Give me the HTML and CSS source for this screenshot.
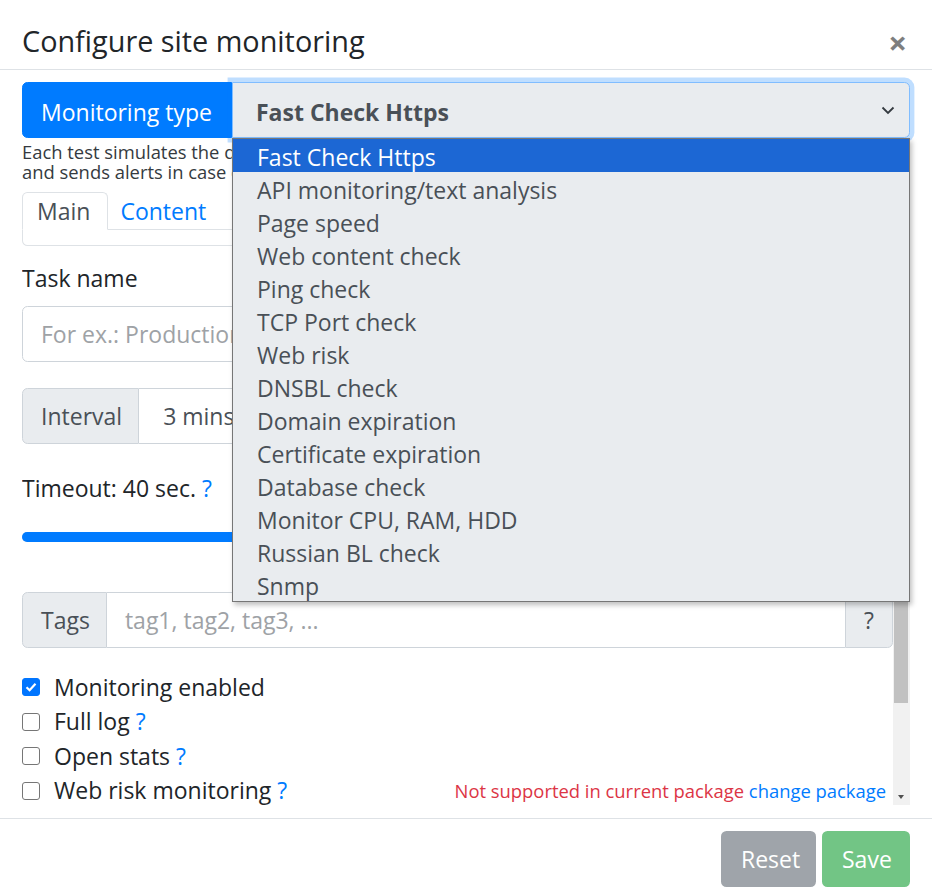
FILE: index.html
```html
<!DOCTYPE html>
<html lang="en">
<head>
<meta charset="utf-8">
<title>Configure site monitoring</title>
<link rel="stylesheet" href="styles.css">
</head>
<body>
<div class="modal">
  <header class="modal-header">
    <h5 class="modal-title">Configure site monitoring</h5>
    <button class="close" type="button">&times;</button>
  </header>

  <div class="modal-body">
    <div class="input-group type-group">
      <span class="group-label primary">Monitoring type</span>
      <div class="select focused">
        <span class="select-value">Fast Check Https</span>
        <svg class="chevron" width="14" height="9" viewBox="0 0 14 9"><path d="M1.5 1.5 L7 7 L12.5 1.5" fill="none" stroke="#343a40" stroke-width="1.8"/></svg>
      </div>
    </div>
    <p class="help">Each test simulates the download of the page by the browser, checks the answer code<br>and sends alerts in case of errors or when the check timeout is exceeded.</p>

    <div class="scroll-wrap">
      <div class="scroll-content">
        <div class="tabs">
          <nav class="nav-tabs">
            <a class="nav-link active">Main</a>
            <a class="nav-link">Content</a>
          </nav>
          <div class="tab-content"></div>
        </div>

        <div class="field">
          <label class="field-label">Task name</label>
          <div class="form-control placeholder">For ex.: Production site</div>
        </div>

        <div class="input-group interval-group">
          <span class="group-label">Interval</span>
          <div class="form-control value">3 mins</div>
        </div>

        <p class="timeout">Timeout: 40 sec. <a class="hint">?</a></p>
        <div class="range"><div class="range-fill"></div></div>

        <div class="input-group tags-group">
          <span class="group-label">Tags</span>
          <div class="form-control placeholder flat">tag1, tag2, tag3, ...</div>
          <span class="group-label append">?</span>
        </div>

        <ul class="checks">
          <li><span class="box checked"><svg width="12" height="10" viewBox="0 0 12 10"><path d="M1.5 5.2 L4.6 8.2 L10.5 1.8" fill="none" stroke="#fff" stroke-width="2.2"/></svg></span>Monitoring enabled</li>
          <li><span class="box"></span>Full log <a class="hint">?</a></li>
          <li><span class="box"></span>Open stats <a class="hint">?</a></li>
          <li><span class="box"></span>Web risk monitoring <a class="hint">?</a>
            <span class="note"><span class="danger">Not supported in current package</span> <a class="link">change package</a></span>
          </li>
        </ul>
      </div>
      <div class="scrollbar">
        <div class="sb-arrow up"></div>
        <div class="sb-thumb"></div>
        <div class="sb-track"></div>
        <div class="sb-arrow down"></div>
      </div>
    </div>

    <ul class="dropdown">
      <li class="selected">Fast Check Https</li>
      <li>API monitoring/text analysis</li>
      <li>Page speed</li>
      <li>Web content check</li>
      <li>Ping check</li>
      <li>TCP Port check</li>
      <li>Web risk</li>
      <li>DNSBL check</li>
      <li>Domain expiration</li>
      <li>Certificate expiration</li>
      <li>Database check</li>
      <li>Monitor CPU, RAM, HDD</li>
      <li>Russian BL check</li>
      <li>Snmp</li>
    </ul>
  </div>

  <footer class="modal-footer">
    <button class="btn btn-secondary" type="button">Reset</button>
    <button class="btn btn-success" type="button">Save</button>
  </footer>
</div>
</body>
</html>
```

FILE: styles.css
```css
* { box-sizing: border-box; }

html, body {
  margin: 0;
  background: #fff;
}

body {
  font-family: "Open Sans", "Noto Sans", "Liberation Sans", sans-serif;
  font-size: 23px;
  line-height: 33px;
  color: #212529;
}

.modal {
  width: 932px;
  height: 894px;
  display: flex;
  flex-direction: column;
  overflow: hidden;
}

.modal > * { flex-shrink: 0; }

/* header */
.modal-header {
  height: 70px;
  border-bottom: 1px solid #dee2e6;
  display: flex;
  align-items: center;
  justify-content: space-between;
  padding: 12px 22px 0 22px;
}

.modal-title {
  margin: 0;
  font-size: 28.8px;
  font-weight: 500;
  line-height: 41px;
  color: #212529;
}

.close {
  border: 0;
  background: none;
  padding: 0;
  margin: 4px 3px 0 0;
  font-family: inherit;
  font-size: 33px;
  font-weight: 700;
  line-height: 33px;
  color: #000;
  opacity: .5;
}

/* body */
.modal-body {
  position: relative;
  padding: 12px 22px 0 22px;
}

.input-group {
  display: flex;
  height: 56px;
}

.group-label {
  display: flex;
  align-items: center;
  padding: 0 16px 0 18px;
  background: #e9ecef;
  border: 1px solid #ced4da;
  color: #495057;
  border-radius: 5.5px 0 0 5.5px;
  white-space: nowrap;
}

.group-label.primary {
  background: #007bff;
  border-color: #007bff;
  color: #fff;
  width: 210px;
  padding-top: 4px;
}

.group-label.append {
  border-radius: 0 5.5px 5.5px 0;
  width: 48px;
  justify-content: center;
  padding: 0;
}

.select {
  flex: 1;
  display: flex;
  align-items: center;
  justify-content: space-between;
  padding: 4px 14px 0 23px;
  background: #e9ecef;
  border: 1px solid #ced4da;
  border-radius: 0 5.5px 5.5px 0;
  color: #495057;
  font-weight: 700;
}

.select .chevron { margin-top: -4px; }

.select.focused {
  border-color: #80bdff;
  box-shadow: 0 0 0 4.4px rgba(0, 123, 255, .25);
}

.help {
  margin: 4px 0 0 0;
  font-size: 18.4px;
  line-height: 20px;
  color: #343a40;
}

/* scrolling part of the form */
.scroll-wrap {
  display: flex;
  height: 623px;
}

.scroll-content {
  flex: 1;
  overflow: hidden;
  min-width: 0;
}

.scrollbar {
  width: 17px;
  display: flex;
  flex-direction: column;
  background: #f1f1f1;
}

.sb-arrow { height: 17px; position: relative; }
.sb-arrow::after {
  content: "";
  position: absolute;
  left: 5px;
  top: 7px;
  border-left: 3.5px solid transparent;
  border-right: 3.5px solid transparent;
}
.sb-arrow.up::after { border-bottom: 4px solid #a3a3a3; }
.sb-arrow.down::after { border-top: 4px solid #505050; }

.sb-thumb {
  height: 504px;
  margin: 0 2px 0 1px;
  background: #c1c1c1;
}

.sb-track { flex: 1; }

/* tabs */
.tabs { margin-top: 10px; }

.nav-tabs {
  display: flex;
  border-bottom: 1px solid #dee2e6;
}

.nav-link {
  padding: 5px 14px 5px 11px;
  line-height: 26px;
  border: 1px solid transparent;
  margin-bottom: -1px;
  color: #007bff;
}

.nav-link.active {
  padding: 5px 17px 5px 14px;
  color: #495057;
  border-color: #dee2e6 #dee2e6 #fff;
  border-radius: 5.5px 5.5px 0 0;
  background: #fff;
}

.tab-content {
  height: 16px;
  border: 1px solid #dee2e6;
  border-top: 0;
  border-radius: 0 0 5.5px 5.5px;
}

/* fields */
.field { margin-top: 16px; }

.field-label {
  display: block;
  margin-bottom: 11px;
}

.form-control {
  height: 56px;
  display: flex;
  align-items: center;
  padding: 0 18px;
  border: 1px solid #ced4da;
  border-radius: 5.5px;
  flex: 1;
}

.form-control.placeholder { color: #9ea2a6; }
.form-control.value { color: #495057; padding-left: 24px; }

.input-group .form-control {
  border-left: 0;
  border-radius: 0 5.5px 5.5px 0;
}

.input-group .form-control.flat { border-radius: 0; border-right: 0; }

.interval-group { margin-top: 26px; }

.timeout { margin: 28px 0 0 0; }

.hint, .link { color: #007bff; }

.range {
  margin-top: 27px;
  height: 10px;
  border-radius: 5px;
  background: #dee2e6;
  overflow: hidden;
}

.range-fill {
  width: 60%;
  height: 100%;
  background: #007bff;
}

.tags-group { margin-top: 50px; }

/* checkboxes */
.checks {
  list-style: none;
  margin: 22px 0 0 0;
  padding: 0;
}

.checks li {
  display: flex;
  align-items: center;
  height: 34.5px;
}

.box {
  width: 18px;
  height: 18px;
  margin-right: 14px;
  border: 1.5px solid #767676;
  border-radius: 3px;
  display: flex;
  align-items: center;
  justify-content: center;
  flex: 0 0 auto;
}

.box.checked {
  background: #0075ff;
  border-color: #0075ff;
}

.checks .hint { margin-left: 6px; }

.note {
  margin-left: auto;
  margin-right: 7px;
  font-size: 18.4px;
}

.danger { color: #dc3545; }

/* open select list */
.dropdown {
  position: absolute;
  left: 232px;
  top: 68px;
  width: 678px;
  margin: 0;
  padding: 0;
  list-style: none;
  background: #e9ecef;
  border: 1px solid #767676;
  box-shadow: 2px 3px 5px rgba(0, 0, 0, .25);
  color: #495057;
}

.dropdown li {
  height: 33px;
  line-height: 33px;
  padding: 2px 0 0 24px;
}

.dropdown li.selected {
  background: #1c67d4;
  color: #fff;
}

/* footer */
.modal-footer {
  margin-top: 13px;
  border-top: 1px solid #dee2e6;
  display: flex;
  justify-content: flex-end;
  gap: 6px;
  padding: 12px 22px;
}

.btn {
  height: 56px;
  padding: 0 20px;
  border: 0;
  border-radius: 5.5px;
  font-family: inherit;
  font-size: 23px;
  color: #fff;
  opacity: .65;
}

.btn-secondary { background: #6c757d; width: 95px; }
.btn-success { background: #28a745; width: 88px; }
```
